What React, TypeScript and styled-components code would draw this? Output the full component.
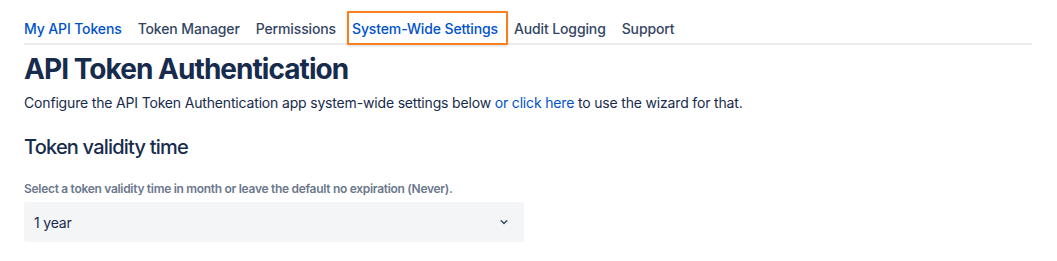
import React from 'react'
import styled, { createGlobalStyle } from 'styled-components'

const tabs = [
  { label: 'My API Tokens', active: true },
  { label: 'Token Manager' },
  { label: 'Permissions' },
  { label: 'System-Wide Settings', highlighted: true, active: true },
  { label: 'Audit Logging' },
  { label: 'Support' },
]

const App = () => {
  return (
    <>
      <GlobalStyle />
      <Page>
        <TabBar>
          {tabs.map((tab) => (
            <Tab key={tab.label} $active={!!tab.active} $highlighted={!!tab.highlighted}>
              {tab.label}
            </Tab>
          ))}
        </TabBar>
        <Title>API Token Authentication</Title>
        <Intro>
          Configure the API Token Authentication app system-wide settings below{' '}
          <TextLink href='#'>or click here</TextLink> to use the wizard for that.
        </Intro>
        <SectionTitle>Token validity time</SectionTitle>
        <FieldLabel>Select a token validity time in month or leave the default no expiration (Never).</FieldLabel>
        <SelectBox>
          <span>1 year</span>
          <svg width='12' height='12' viewBox='0 0 24 24'>
            <path d='M6.5 9.5l5.5 5.5 5.5-5.5' fill='none' stroke='#42526e' strokeWidth='3' strokeLinecap='round' strokeLinejoin='round' />
          </svg>
        </SelectBox>
      </Page>
    </>
  )
}

const GlobalStyle = createGlobalStyle`
  body {
    margin: 0;
    background: #fff;
    font-family: Inter, 'Noto Sans', sans-serif;
    color: #172b4d;
  }
`

const Page = styled.div`
  padding: 0 24px 0 24px;
  width: 1032px;
  box-sizing: border-box;
`

const TabBar = styled.div`
  display: flex;
  gap: 16px;
  margin-top: 19px;
  border-bottom: 2px solid #ebecf0;
  width: 1008px;
`

const Tab = styled.div<{ $active: boolean; $highlighted: boolean }>`
  position: relative;
  font-size: 14px;
  font-weight: 500;
  line-height: 20px;
  padding-bottom: 4px;
  color: ${({ $active }) => ($active ? '#0052cc' : '#344563')};
  letter-spacing: -0.13px;

  ${({ $highlighted }) =>
    $highlighted &&
    `
    &::after {
      content: '';
      position: absolute;
      left: -5px;
      right: -10px;
      top: -8px;
      bottom: -2px;
      border: 2px solid #f7811f;
      border-radius: 1px;
      box-shadow: 0 1px 3px rgba(0, 0, 0, 0.15);
    }
  `}
`

const Title = styled.h1`
  margin: 6px 0 0;
  font-size: 28px;
  font-weight: 700;
  line-height: 36px;
  letter-spacing: -0.95px;
  color: #172b4d;
`

const Intro = styled.p`
  margin: 6px 0 0;
  font-size: 14px;
  line-height: 20px;
  letter-spacing: -0.17px;
  color: #172b4d;
`

const TextLink = styled.a`
  color: #0052cc;
  text-decoration: none;
`

const SectionTitle = styled.h2`
  margin: 22px 0 0;
  font-size: 20px;
  font-weight: 500;
  line-height: 24px;
  letter-spacing: -0.8px;
  color: #172b4d;
`

const FieldLabel = styled.div`
  margin-top: 22px;
  font-size: 12px;
  font-weight: 600;
  line-height: 16px;
  letter-spacing: -0.3px;
  color: #6b778c;
`

const SelectBox = styled.div`
  margin-top: 5px;
  width: 500px;
  height: 40px;
  box-sizing: border-box;
  padding: 0 14px 0 10px;
  display: flex;
  align-items: center;
  justify-content: space-between;
  background: #f4f5f7;
  border-radius: 3px;
  font-size: 14px;
  letter-spacing: -0.2px;
  color: #172b4d;
`

export default App
